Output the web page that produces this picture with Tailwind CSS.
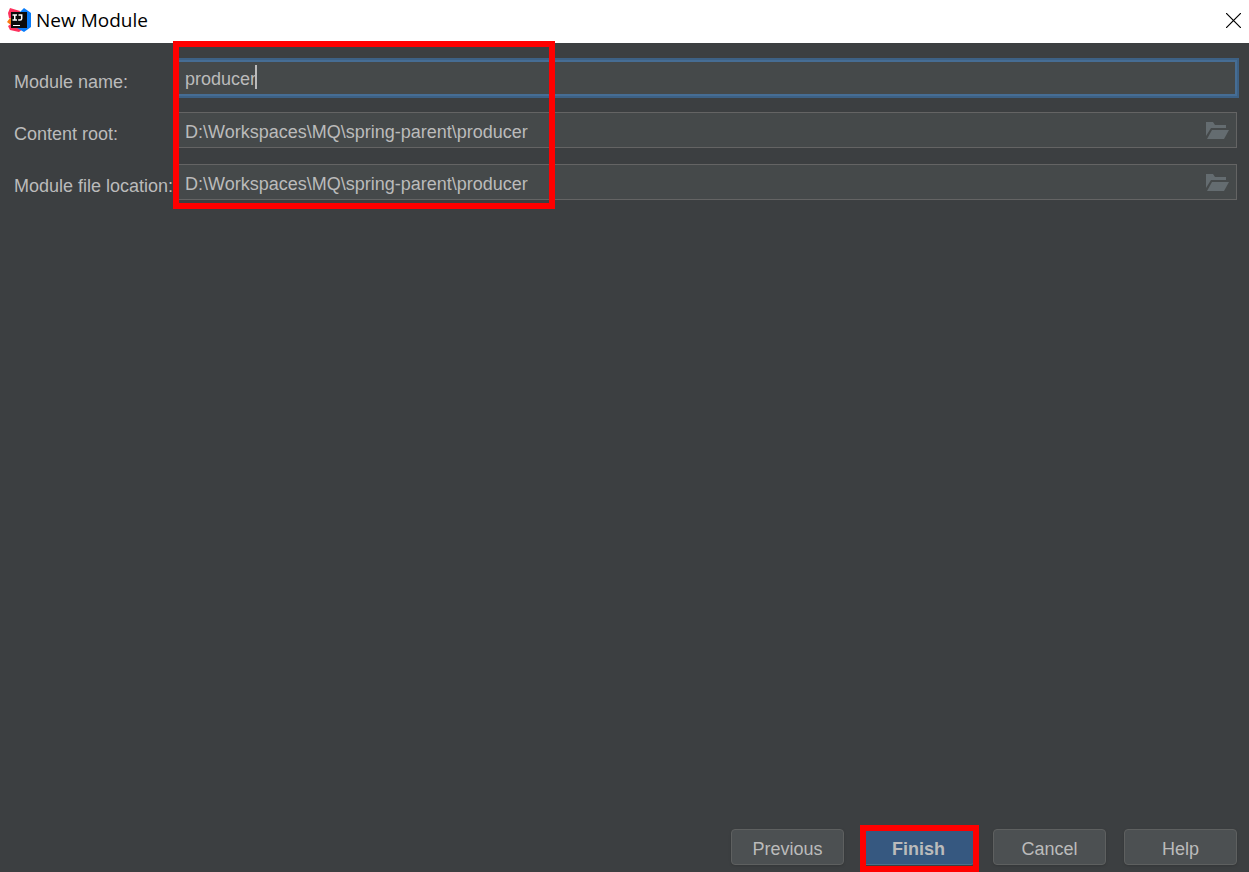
<!DOCTYPE html>
<html lang="en">
<head>
  <meta charset="UTF-8">
  <meta name="viewport" content="width=device-width, initial-scale=1.0">
  <title>New Module</title>
  <script src="https://cdn.jsdelivr.net/npm/@tailwindcss/browser@4"></script>
</head>
<body class="bg-[#3c3f41]">

  <div class="min-h-screen flex flex-col text-lg text-[#bbbbbb] font-['Liberation_Sans',Arial,sans-serif]">
    <!-- Title Bar -->
    <header class="h-[43px] pl-[7px] pr-2 pb-[3px] flex items-center justify-between bg-white text-black">
      <div class="flex items-center gap-1">
        <svg class="w-[25px] h-6" viewBox="0 0 25 24" aria-hidden="true">
          <path d="M1 5 L3 0 L13 3 L11 12 L2 10 Z" fill="#fe315d"/>
          <path d="M0 14 L3 10 L8 14 L5 18 Z" fill="#f97a12"/>
          <path d="M1 18 L6 15 L17 20 L12 24 L3 22 Z" fill="#fe315d"/>
          <path d="M12 5 L17 0 L24 5 L24 19 L17 24 L10 20 Z" fill="#087cfa"/>
          <rect x="4" y="4" width="16" height="16" fill="#0b0b0b"/>
          <path d="M5.500 7 H10 M7.750 7 V12 M5.500 12 H10 M11.500 7 H14.700 V10.500 Q14.700 12 13.200 12 H11.200" fill="none" stroke="#fff" stroke-width="1.500"/>
          <rect x="6" y="17" width="7" height="1" fill="#fff"/>
        </svg>
        <h1 class="pt-0.5 text-[19px] font-['Open_Sans','Segoe_UI',sans-serif]">New Module</h1>
      </div>
      <button type="button" aria-label="Close">
        <svg class="w-[15px] h-[15px]" viewBox="0 0 15 15" fill="none" stroke="#000" stroke-width="1.200">
          <path d="M0 0 L15 15 M15 0 L0 15"/>
        </svg>
      </button>
    </header>

    <!-- Module Form -->
    <main class="relative flex-1 pt-[17px] pl-[14px] pr-3">
      <form class="grid grid-cols-[162px_1fr] gap-y-4 items-center">
        <label for="module-name" class="pt-2 whitespace-nowrap">Module name:</label>
        <div class="relative">
          <input id="module-name" type="text" value="producer" class="block w-full h-9 pt-0.5 px-[7px] bg-[#45494a] border-2 border-[#466d94] ring-2 ring-[#3d6185] outline-none">
          <!-- Text cursor -->
          <span class="absolute left-[79px] top-[5px] w-0.5 h-6 bg-[#bbbbbb]"></span>
        </div>

        <label for="content-root" class="pt-2 whitespace-nowrap">Content root:</label>
        <div class="h-9 flex items-center pr-[7px] bg-[#45494a] border border-[#646464]">
          <input id="content-root" type="text" value="D:\Workspaces\MQ\spring-parent\producer" class="flex-1 min-w-0 pt-[3px] px-2 outline-none">
          <button type="button" aria-label="Browse content root">
            <svg class="w-[23px] h-[18px]" viewBox="0 0 23 18" fill="#646c70">
              <path d="M0 1 H7 L9 4 H20 V7 H5 L0 15 Z"/>
              <path d="M6 9 H23 L18 18 H1 Z"/>
            </svg>
          </button>
        </div>

        <label for="file-location" class="pt-2 whitespace-nowrap">Module file location:</label>
        <div class="h-9 flex items-center pr-[7px] bg-[#45494a] border border-[#646464]">
          <input id="file-location" type="text" value="D:\Workspaces\MQ\spring-parent\producer" class="flex-1 min-w-0 pt-[3px] px-2 outline-none">
          <button type="button" aria-label="Browse module file location">
            <svg class="w-[23px] h-[18px]" viewBox="0 0 23 18" fill="#646c70">
              <path d="M0 1 H7 L9 4 H20 V7 H5 L0 15 Z"/>
              <path d="M6 9 H23 L18 18 H1 Z"/>
            </svg>
          </button>
        </div>
      </form>

      <!-- Highlight around the fields -->
      <div class="absolute left-[173px] -top-0.5 w-[382px] h-[168px] border-6 border-[#ff0000] pointer-events-none"></div>
    </main>

    <!-- Buttons -->
    <footer class="flex justify-end gap-[18px] pr-3 pb-[7px]">
      <button type="button" class="w-[113px] h-9 pt-1 bg-[#4c5052] border border-[#5e6060] rounded shadow-sm">Previous</button>
      <div class="relative">
        <button type="button" class="w-[113px] h-9 pt-1 bg-[#365880] border border-[#4c708c] rounded font-bold">Finish</button>
        <div class="absolute -left-0.5 -right-1 -top-1 -bottom-[7px] border-6 border-[#ff0000] pointer-events-none"></div>
      </div>
      <button type="button" class="w-[113px] h-9 pt-1 bg-[#4c5052] border border-[#5e6060] rounded shadow-sm">Cancel</button>
      <button type="button" class="w-[113px] h-9 pt-1 bg-[#4c5052] border border-[#5e6060] rounded shadow-sm">Help</button>
    </footer>
  </div>

</body>
</html>
